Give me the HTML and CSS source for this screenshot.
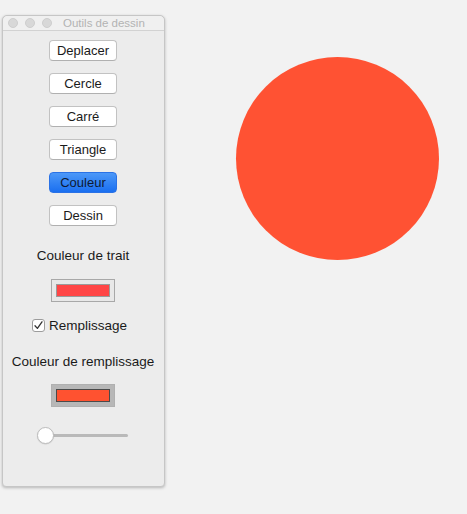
FILE: index.html
```html
<!DOCTYPE html>
<html>
<head>
<meta charset="utf-8">
<link rel="stylesheet" href="styles.css">
</head>
<body>
<div class="desk">
  <div class="window">
    <div class="titlebar">
      <span class="light"></span><span class="light"></span><span class="light"></span>
      <span class="title">Outils de dessin</span>
    </div>
    <div class="content">
      <div class="btn">Deplacer</div>
      <div class="btn">Cercle</div>
      <div class="btn">Carré</div>
      <div class="btn">Triangle</div>
      <div class="btn active">Couleur</div>
      <div class="btn">Dessin</div>
      <div class="label first">Couleur de trait</div>
      <div class="well"><div class="swatch stroke"></div></div>
      <div class="check-row">
        <span class="checkbox"><svg width="11" height="11" viewBox="0 0 11 11"><path d="M2 5.8 L4.4 8.4 L9 1.8" fill="none" stroke="#333" stroke-width="1.3" stroke-linecap="round" stroke-linejoin="round"/></svg></span>
        <span class="check-label">Remplissage</span>
      </div>
      <div class="label">Couleur de remplissage</div>
      <div class="well selected"><div class="swatch fill"></div></div>
      <div class="slider">
        <div class="track"></div>
        <div class="knob"></div>
      </div>
    </div>
  </div>
  <div class="circle"></div>
</div>
</body>
</html>
```
FILE: styles.css
```css
html, body {
  margin: 0;
  padding: 0;
  background: #f2f2f2;
  font-family: "Liberation Sans", Arial, sans-serif;
  font-size: 13px;
  color: #1a1a1a;
}
.desk {
  display: flex;
  align-items: flex-start;
  width: 467px;
  height: 514px;
}
.window {
  margin-left: 2px;
  margin-top: 15px;
  width: 161px;
  height: 470px;
  background: #ececec;
  border: 1px solid #c6c6c6;
  border-radius: 5px 5px 4px 4px;
  box-shadow: 0 1px 3px rgba(0,0,0,0.25);
  display: flex;
  flex-direction: column;
}
.titlebar {
  height: 14px;
  border-bottom: 1px solid #d2d2d2;
  background: #f0f0f0;
  border-radius: 5px 5px 0 0;
  display: flex;
  align-items: center;
  padding-left: 5px;
  gap: 7px;
}
.light {
  width: 10px;
  height: 10px;
  border-radius: 50%;
  background: #d8d8d8;
  border: 1px solid #cecece;
  box-sizing: border-box;
}
.title {
  margin-left: 4px;
  color: #b3b3b3;
  font-size: 11.5px;
}
.content {
  display: flex;
  flex-direction: column;
  align-items: center;
  padding-top: 9px;
}
.btn {
  width: 68px;
  height: 21px;
  box-sizing: border-box;
  background: #fff;
  border: 1px solid #c2c2c2;
  border-bottom-color: #b0b0b0;
  border-radius: 4px;
  display: flex;
  align-items: center;
  justify-content: center;
  margin-bottom: 12px;
  margin-right: 1px;
}
.btn.active {
  background: linear-gradient(#4c98f8, #1a6ff0);
  border-color: #2a72e6;
  color: #0e1a33;
}
.label {
  line-height: 16px;
  font-size: 13.5px;
  margin-right: 1px;
}
.label.first {
  margin-top: 10px;
}
.well {
  margin-top: 15px;
  margin-right: 1px;
  width: 64px;
  height: 23px;
  box-sizing: border-box;
  border: 1px solid #a8a8a8;
  background: #e8e8e8;
  display: flex;
  align-items: center;
  justify-content: center;
}
.well.selected {
  background: #b7b7b7;
  border-color: #b0b0b0;
  margin-top: 14px;
}
.swatch {
  width: 54px;
  height: 13px;
  box-sizing: border-box;
}
.swatch.stroke {
  background: #ff4646;
  border: 1px solid #9a9a9a;
}
.swatch.fill {
  background: #ff5230;
  border: 1px solid #4a4a4a;
}
.check-row {
  display: flex;
  align-items: center;
  gap: 4px;
  margin-top: 16px;
  margin-bottom: 21px;
  margin-right: 8px;
  font-size: 13.5px;
}
.checkbox {
  width: 13px;
  height: 13px;
  box-sizing: border-box;
  border: 1px solid #9c9c9c;
  border-radius: 3px;
  background: #fff;
  display: flex;
  align-items: center;
  justify-content: center;
}
.slider {
  position: relative;
  width: 92px;
  height: 18px;
  margin-top: 20px;
  margin-right: 2px;
}
.track {
  position: absolute;
  left: 9px;
  right: 1px;
  top: 7px;
  height: 3px;
  border-radius: 2px;
  background: #b9b9b9;
}
.knob {
  position: absolute;
  left: 0;
  top: 0;
  width: 17px;
  height: 17px;
  box-sizing: border-box;
  border-radius: 50%;
  background: #fff;
  border: 1px solid #bdbdbd;
  box-shadow: 0 0.5px 1px rgba(0,0,0,0.15);
}
.circle {
  margin-left: 71px;
  margin-top: 57px;
  width: 203px;
  height: 203px;
  border-radius: 50%;
  background: #ff5233;
}
```
